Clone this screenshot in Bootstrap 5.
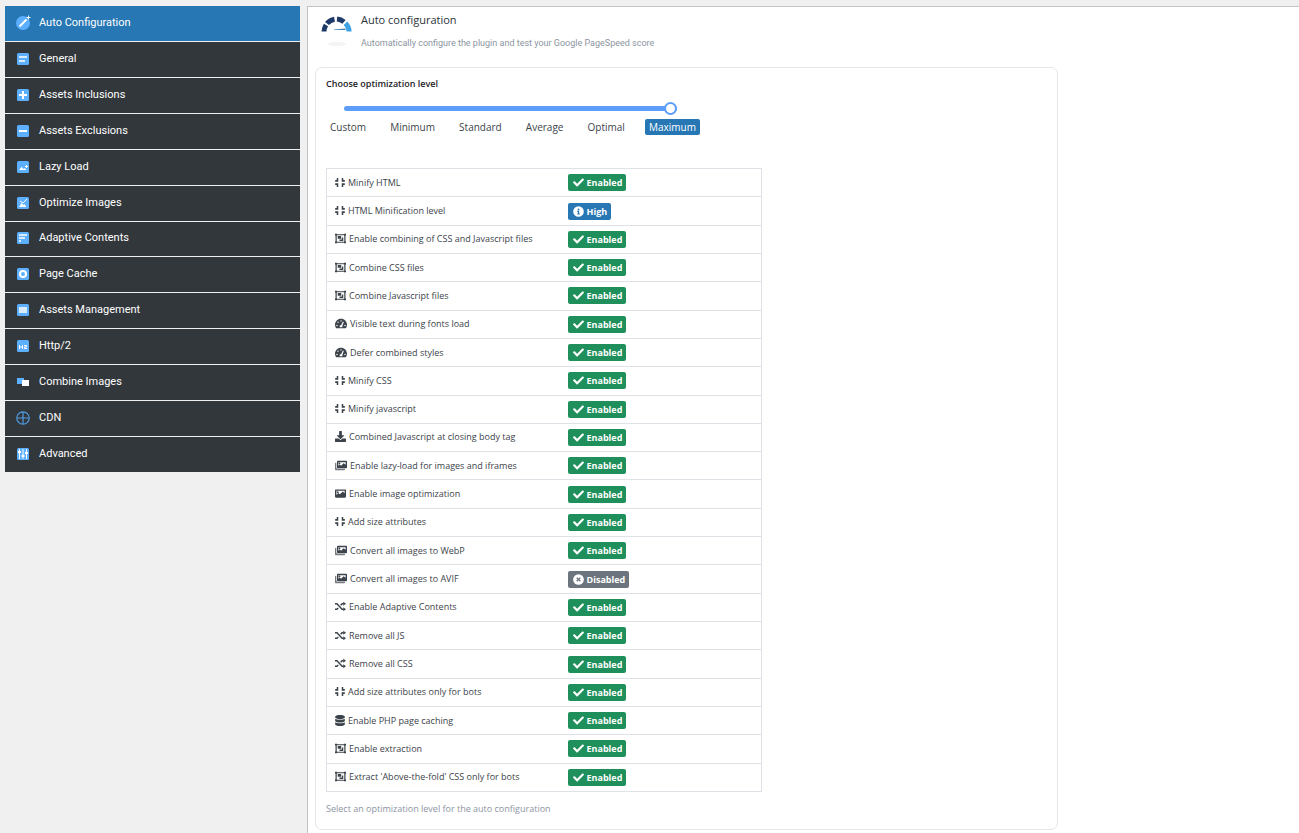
<!DOCTYPE html>
<html lang="en">
<head>
<meta charset="utf-8">
<meta name="viewport" content="width=device-width, initial-scale=1">
<title>Auto configuration</title>
<link href="https://cdn.jsdelivr.net/npm/bootstrap@5.3.0/dist/css/bootstrap.min.css" rel="stylesheet">
<style>
  body { background: #f0f0f1; font-family: "Open Sans", "Noto Sans", sans-serif; font-size: 11px; line-height: 16px; color: #3c434a; }
  .shell { padding: 6px 0 0 5px; gap: 7px; }
  .side-menu { width: 295px; min-height: 466px; gap: 1px; flex: none; }
  .side-menu .nav-link { background: #32373c; color: #fff; padding: 0 10px 1px; gap: 8px; font-family: Roboto, "Open Sans", sans-serif; font-size: 11px; }
  .side-menu .nav-link.active { background: #2777b5; }
  .side-menu svg { width: 16px; height: 16px; flex: none; }
  .main-pane { background: #fff; border: solid #c3c4c7; border-width: 1px 0 0 1px; min-height: calc(100vh - 6px); min-width: 0; }
  .page-head { padding: 5px 0 0 12px; gap: 8px; height: 60px; }
  .page-head h1 { font-size: 11px; line-height: 16px; margin: 0 0 7px; color: #2c3338; }
  .page-head p, .hint { font-size: 9px; line-height: 16px; color: #8c959f; margin: 0; }
  .page-head p { font-family: Roboto, "Open Sans", sans-serif; }
  .panel { margin-left: 7px; padding: 8px 10px 12px; border: 1px solid #e4e6e8; border-radius: 7px; background: #fff; }
  .panel-title { font-size: 9px; line-height: 16px; font-weight: 600; color: #1d2327; }
  .level-box { width: 374px; }
  .form-range.level { display: block; width: 333px; height: 14px; margin: 9px 0 4px 18px; }
  .level::-webkit-slider-runnable-track { height: 5px; background: #5b9df9; border-radius: 3px; }
  .level::-webkit-slider-thumb { width: 13px; height: 13px; margin-top: -4px; background: #fff; border: 2px solid #5b9df9; border-radius: 50%; }
  .level-names span { padding: 0 4px; line-height: 16px; border-radius: 2px; font-size: 10px; }
  .level-names .picked { background: #2777b5; color: #fff; }
  .settings { max-width: 436px; height: 624px; margin: 33px 0 9px; font-size: 9px; color: #3c434a; border: 1px solid #dee2e6; }
  .settings > tbody > tr > * { padding: 0 8px; line-height: 16px; vertical-align: middle; color: #3c434a; }
  .settings th { font-weight: 400; width: 233px; }
  .settings th svg { height: 11px; width: 11px; margin-right: 3px; vertical-align: -2px; }
  .settings th svg.narrow { width: 10px; }
  .settings th svg.wide { width: 12px; }
  .settings .badge { display: inline-flex; align-items: center; gap: 3px; padding: 0 4px 0 5px; height: 17px; border-radius: 2px; font-size: 9px; font-weight: 700; vertical-align: middle; }
  .badge svg { width: 11px; height: 11px; }
  .on { background: #1f8f5b; }
  .info { background: #2777b5; }
  .off { background: #6c757d; }
</style>
</head>
<body>

<svg class="d-none" aria-hidden="true">
  <symbol id="compress" viewBox="0 0 448 512" fill="currentColor"><path d="M0 144h72V48h72v168H0zM304 48h72v96h72v72H304zM0 296h144v168H72v-96H0zM304 296h144v72h-72v96h-72z"/></symbol>
  <symbol id="group" viewBox="0 0 512 512" fill="currentColor"><path fill-rule="evenodd" d="M0 32h96v24h320V32h96v88h-24v272h24v88h-96v-24H96v24H0v-88h24V120H0zm96 88H80v272h16v16h320v-16h16V120h-16v-16H96z"/><path d="M128 144h160v128H128zM320 208h64v160H208v-64h112z"/></symbol>
  <symbol id="gauge" viewBox="0 0 576 512" fill="currentColor"><path fill-rule="evenodd" d="M288 32C129 32 0 161 0 320c0 53 14 102 39 145 6 10 16 15 28 15h442c12 0 22-5 28-15 25-43 39-92 39-145C576 161 447 32 288 32zm0 64a34 34 0 1 1 0 68 34 34 0 0 1 0-68zM96 384a34 34 0 1 1 0-68 34 34 0 0 1 0 68zm48-160a34 34 0 1 1 0-68 34 34 0 0 1 0 68zm336 160a34 34 0 1 1 0-68 34 34 0 0 1 0 68zM380 162l44 16-70 190c8 20 4 46-6 64H228c-18-50 10-96 70-100z"/></symbol>
  <symbol id="download" viewBox="0 0 512 512" fill="currentColor"><path d="M216 0h80c13 0 24 11 24 24v168h88c18 0 27 21 14 34L270 378c-8 7-20 7-28 0L90 226c-13-13-4-34 14-34h88V24c0-13 11-24 24-24zm296 376v112c0 13-11 24-24 24H24c-13 0-24-11-24-24V376c0-13 11-24 24-24h147l49 49c20 20 52 20 72 0l49-49h147c13 0 24 11 24 24z"/></symbol>
  <symbol id="image" viewBox="0 0 512 512" fill="currentColor"><path fill-rule="evenodd" d="M48 64h416c27 0 48 21 48 48v288c0 27-21 48-48 48H48c-27 0-48-21-48-48V112c0-27 21-48 48-48zm16 64v192l96-88 64 64 144-136 80 80v-112zm64 24a44 44 0 1 1 0 88 44 44 0 0 1 0-88z"/></symbol>
  <symbol id="images" viewBox="0 0 576 512" fill="currentColor"><path opacity=".7" d="M480 416v16c0 27-21 48-48 48H48c-27 0-48-21-48-48V176c0-27 21-48 48-48h16v208c0 44 36 80 80 80z"/><path fill-rule="evenodd" d="M144 32h384c27 0 48 21 48 48v256c0 27-21 48-48 48H144c-27 0-48-21-48-48V80c0-27 21-48 48-48zm16 64v170l72-58 56 56 128-120 96 80V96zm56 20a40 40 0 1 1 0 80 40 40 0 0 1 0-80z"/></symbol>
  <symbol id="shuffle" viewBox="0 0 512 512" fill="none" stroke="currentColor" stroke-width="66"><path d="M0 128h92l236 256h72M0 384h92l60-64M262 200l66-72h72"/><path fill="currentColor" stroke="none" d="M384 32l128 96-128 96zM384 288l128 96-128 96z"/></symbol>
  <symbol id="database" viewBox="0 0 448 512" fill="currentColor"><path d="M448 73v46c0 40-100 73-224 73S0 159 0 119V73C0 33 100 0 224 0s224 33 224 73zM448 176v103c0 40-100 73-224 73S0 319 0 279V176c48 33 136 49 224 49s176-16 224-49zM448 336v103c0 40-100 73-224 73S0 479 0 439V336c48 33 136 49 224 49s176-16 224-49z"/></symbol>
  <symbol id="check" viewBox="0 0 512 512" fill="currentColor"><path d="M174 439L8 273c-10-10-10-26 0-36l36-36c10-10 26-10 36 0l112 112L432 73c10-10 26-10 36 0l36 36c10 10 10 26 0 36L210 439c-10 10-26 10-36 0z"/></symbol>
  <symbol id="info" viewBox="0 0 512 512" fill="currentColor"><path fill-rule="evenodd" d="M256 8a248 248 0 1 0 0 496 248 248 0 0 0 0-496zm0 110a42 42 0 1 1 0 84 42 42 0 0 1 0-84zm-56 108h88v120h24v48H200v-48h24v-72h-24z"/></symbol>
  <symbol id="cross" viewBox="0 0 512 512"><circle cx="256" cy="256" r="248" fill="currentColor"/><path d="M172 172l168 168M340 172L172 340" stroke="#6c757d" stroke-width="60"/></symbol>
</svg>

<div class="shell d-flex align-items-start">
  <nav class="side-menu nav flex-column flex-nowrap" aria-label="Settings sections">
    <a class="nav-link active flex-fill d-flex align-items-center" href="#auto" aria-current="page"><svg viewBox="0 0 16 16"><circle cx="8" cy="8" r="7" fill="#5cb0ff"/><path d="M4.500 11.500l7-7" stroke="#fff" stroke-width="2"/><path d="M13.500 0.500v4M11.500 2.500h4" stroke="#fff"/></svg>Auto Configuration</a>
    <a class="nav-link flex-fill d-flex align-items-center" href="#general"><svg viewBox="0 0 16 16"><rect x="2" y="2" width="12" height="12" rx="1.500" fill="#5cb0ff"/><path d="M4 6h8M4 10h6" stroke="#d8ebff" stroke-width="2"/></svg>General</a>
    <a class="nav-link flex-fill d-flex align-items-center" href="#inclusions"><svg viewBox="0 0 16 16"><rect x="2" y="2" width="12" height="12" rx="1.500" fill="#5cb0ff"/><path d="M4 8h8M8 4v8" stroke="#fff" stroke-width="2"/></svg>Assets Inclusions</a>
    <a class="nav-link flex-fill d-flex align-items-center" href="#exclusions"><svg viewBox="0 0 16 16"><rect x="2" y="2" width="12" height="12" rx="1.500" fill="#5cb0ff"/><path d="M4 8h8" stroke="#fff" stroke-width="2"/></svg>Assets Exclusions</a>
    <a class="nav-link flex-fill d-flex align-items-center" href="#lazy"><svg viewBox="0 0 16 16"><rect x="2" y="2" width="12" height="12" rx="1.500" fill="#5cb0ff"/><path d="M4 11l2.500-3 2 2 1-1 2 2z" fill="#fff"/><path d="M11.500 6v3M10 7.500h3" stroke="#fff"/></svg>Lazy Load</a>
    <a class="nav-link flex-fill d-flex align-items-center" href="#optimize"><svg viewBox="0 0 16 16"><rect x="2" y="2" width="12" height="12" rx="1.500" fill="#5cb0ff"/><path d="M4 12l2.500-4 2 2 1-1 2 3z" fill="#fff"/><path d="M5 6l3 2 4-4" stroke="#fff" fill="none"/></svg>Optimize Images</a>
    <a class="nav-link flex-fill d-flex align-items-center" href="#adaptive"><svg viewBox="0 0 16 16"><rect x="2" y="2" width="12" height="12" rx="1.500" fill="#5cb0ff"/><path d="M4 5h8M4 8h6M4 11h2" stroke="#d8ebff" stroke-width="2"/></svg>Adaptive Contents</a>
    <a class="nav-link flex-fill d-flex align-items-center" href="#cache"><svg viewBox="0 0 16 16"><rect x="2" y="2" width="12" height="12" rx="1.500" fill="#5cb0ff"/><circle cx="8" cy="8" r="3" stroke="#fff" stroke-width="2" fill="none"/></svg>Page Cache</a>
    <a class="nav-link flex-fill d-flex align-items-center" href="#management"><svg viewBox="0 0 16 16"><rect x="2" y="2" width="12" height="12" rx="1.500" fill="#5cb0ff"/><rect x="4" y="5" width="8" height="6" fill="#d8ebff"/></svg>Assets Management</a>
    <a class="nav-link flex-fill d-flex align-items-center" href="#http2"><svg viewBox="0 0 16 16"><rect x="2" y="2" width="12" height="12" rx="1.500" fill="#5cb0ff"/><path d="M4.500 7v4M7.500 7v4M4.500 9h3M9 7.500h2.500v1.500H9.500v1.500h2.500" stroke="#fff" fill="none"/></svg>Http/2</a>
    <a class="nav-link flex-fill d-flex align-items-center" href="#combine"><svg viewBox="0 0 16 16"><rect x="2" y="4" width="7" height="6" fill="#5cb0ff"/><rect x="7" y="6" width="7" height="6" fill="#fff"/></svg>Combine Images</a>
    <a class="nav-link flex-fill d-flex align-items-center" href="#cdn"><svg viewBox="0 0 16 16"><circle cx="8" cy="8" r="6.200" fill="none" stroke="#4f9be0" stroke-width="1.200"/><path d="M8 2v12M2 8h12" stroke="#4f9be0" stroke-width="1.200"/></svg>CDN</a>
    <a class="nav-link flex-fill d-flex align-items-center" href="#advanced"><svg viewBox="0 0 16 16"><rect x="2" y="2" width="12" height="12" rx="1.500" fill="#5cb0ff"/><path d="M4.500 3v10M8 3v10M11.500 3v10" stroke="#fff"/><path d="M3 6h3M6.500 10h3M10 7h3" stroke="#fff" stroke-width="2"/></svg>Advanced</a>
  </nav>

  <main class="main-pane flex-fill">
    <header class="page-head d-flex">
      <svg width="33" height="36" viewBox="0 0 33 36" aria-hidden="true">
        <g fill="none" stroke="#1f3a68" stroke-width="5">
          <path d="M4 19.500a12.500 12.500 0 0 1 2-6.500"/><path d="M7 11.500a12.500 12.500 0 0 1 7.500-4.300"/><path d="M17 7a12.500 12.500 0 0 1 7 2.900"/>
          <path d="M25.500 11.200a12.500 12.500 0 0 1 3.600 8.300" stroke="#3ea2e5"/>
        </g>
        <path d="M14 17.500l11.500-1v1.500H14z" fill="#3f86b8"/>
        <ellipse cx="17" cy="32" rx="9" ry="2" fill="#f4f4f4"/>
      </svg>
      <div>
        <h1>Auto configuration</h1>
        <p>Automatically configure the plugin and test your Google PageSpeed score</p>
      </div>
    </header>

    <div class="row g-0">
      <section class="panel col-9">
        <label class="panel-title d-block" for="level">Choose optimization level</label>
        <div class="level-box">
          <input class="form-range level" type="range" id="level" min="0" max="5" value="5">
          <div class="level-names d-flex justify-content-between">
            <span>Custom</span><span>Minimum</span><span>Standard</span><span>Average</span><span>Optimal</span><span class="picked">Maximum</span>
          </div>
        </div>

        <table class="table settings">
          <tbody>
            <tr><th scope="row"><svg class="narrow"><use href="#compress"/></svg>Minify HTML</th><td><span class="badge on"><svg><use href="#check"/></svg>Enabled</span></td></tr>
            <tr><th scope="row"><svg class="narrow"><use href="#compress"/></svg>HTML Minification level</th><td><span class="badge info"><svg><use href="#info"/></svg>High</span></td></tr>
            <tr><th scope="row"><svg><use href="#group"/></svg>Enable combining of CSS and Javascript files</th><td><span class="badge on"><svg><use href="#check"/></svg>Enabled</span></td></tr>
            <tr><th scope="row"><svg><use href="#group"/></svg>Combine CSS files</th><td><span class="badge on"><svg><use href="#check"/></svg>Enabled</span></td></tr>
            <tr><th scope="row"><svg><use href="#group"/></svg>Combine Javascript files</th><td><span class="badge on"><svg><use href="#check"/></svg>Enabled</span></td></tr>
            <tr><th scope="row"><svg class="wide"><use href="#gauge"/></svg>Visible text during fonts load</th><td><span class="badge on"><svg><use href="#check"/></svg>Enabled</span></td></tr>
            <tr><th scope="row"><svg class="wide"><use href="#gauge"/></svg>Defer combined styles</th><td><span class="badge on"><svg><use href="#check"/></svg>Enabled</span></td></tr>
            <tr><th scope="row"><svg class="narrow"><use href="#compress"/></svg>Minify CSS</th><td><span class="badge on"><svg><use href="#check"/></svg>Enabled</span></td></tr>
            <tr><th scope="row"><svg class="narrow"><use href="#compress"/></svg>Minify javascript</th><td><span class="badge on"><svg><use href="#check"/></svg>Enabled</span></td></tr>
            <tr><th scope="row"><svg><use href="#download"/></svg>Combined Javascript at closing body tag</th><td><span class="badge on"><svg><use href="#check"/></svg>Enabled</span></td></tr>
            <tr><th scope="row"><svg class="wide"><use href="#images"/></svg>Enable lazy-load for images and iframes</th><td><span class="badge on"><svg><use href="#check"/></svg>Enabled</span></td></tr>
            <tr><th scope="row"><svg><use href="#image"/></svg>Enable image optimization</th><td><span class="badge on"><svg><use href="#check"/></svg>Enabled</span></td></tr>
            <tr><th scope="row"><svg class="narrow"><use href="#compress"/></svg>Add size attributes</th><td><span class="badge on"><svg><use href="#check"/></svg>Enabled</span></td></tr>
            <tr><th scope="row"><svg class="wide"><use href="#images"/></svg>Convert all images to WebP</th><td><span class="badge on"><svg><use href="#check"/></svg>Enabled</span></td></tr>
            <tr><th scope="row"><svg class="wide"><use href="#images"/></svg>Convert all images to AVIF</th><td><span class="badge off"><svg><use href="#cross"/></svg>Disabled</span></td></tr>
            <tr><th scope="row"><svg><use href="#shuffle"/></svg>Enable Adaptive Contents</th><td><span class="badge on"><svg><use href="#check"/></svg>Enabled</span></td></tr>
            <tr><th scope="row"><svg><use href="#shuffle"/></svg>Remove all JS</th><td><span class="badge on"><svg><use href="#check"/></svg>Enabled</span></td></tr>
            <tr><th scope="row"><svg><use href="#shuffle"/></svg>Remove all CSS</th><td><span class="badge on"><svg><use href="#check"/></svg>Enabled</span></td></tr>
            <tr><th scope="row"><svg class="narrow"><use href="#compress"/></svg>Add size attributes only for bots</th><td><span class="badge on"><svg><use href="#check"/></svg>Enabled</span></td></tr>
            <tr><th scope="row"><svg class="narrow"><use href="#database"/></svg>Enable PHP page caching</th><td><span class="badge on"><svg><use href="#check"/></svg>Enabled</span></td></tr>
            <tr><th scope="row"><svg><use href="#group"/></svg>Enable extraction</th><td><span class="badge on"><svg><use href="#check"/></svg>Enabled</span></td></tr>
            <tr><th scope="row"><svg><use href="#group"/></svg>Extract 'Above-the-fold' CSS only for bots</th><td><span class="badge on"><svg><use href="#check"/></svg>Enabled</span></td></tr>
          </tbody>
        </table>
        <p class="hint">Select an optimization level for the auto configuration</p>
      </section>
    </div>
  </main>
</div>

<script src="https://cdn.jsdelivr.net/npm/bootstrap@5.3.0/dist/js/bootstrap.bundle.min.js"></script>
</body>
</html>
